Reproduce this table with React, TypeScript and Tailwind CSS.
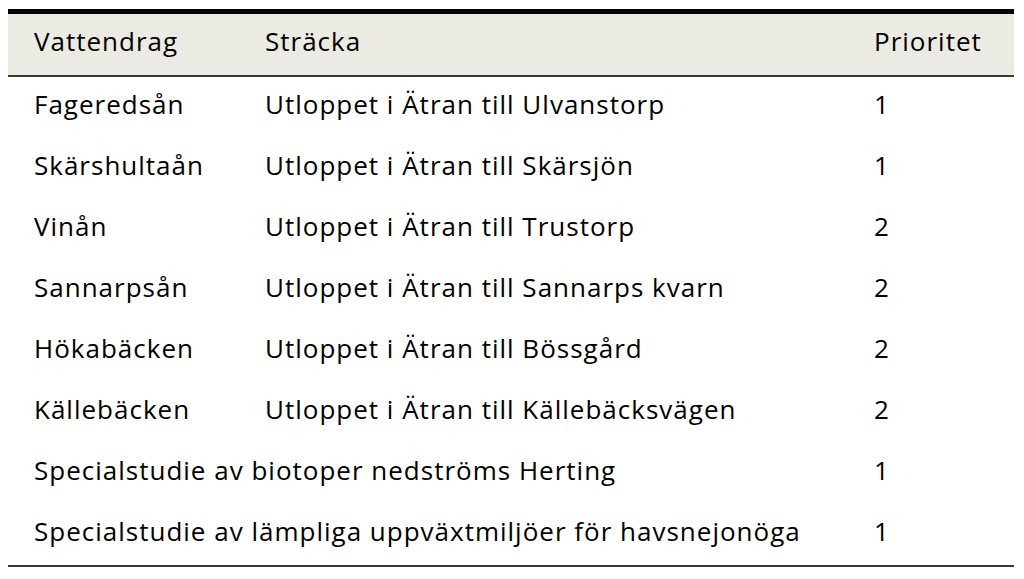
import React from "react";

const rows: [string, string | null, string][] = [
  ["Fageredsån", "Utloppet i Ätran till Ulvanstorp", "1"],
  ["Skärshultaån", "Utloppet i Ätran till Skärsjön", "1"],
  ["Vinån", "Utloppet i Ätran till Trustorp", "2"],
  ["Sannarpsån", "Utloppet i Ätran till Sannarps kvarn", "2"],
  ["Hökabäcken", "Utloppet i Ätran till Bössgård", "2"],
  ["Källebäcken", "Utloppet i Ätran till Källebäcksvägen", "2"],
  ["Specialstudie av biotoper nedströms Herting", null, "1"],
  ["Specialstudie av lämpliga uppväxtmiljöer för havsnejonöga", null, "1"],
];

export default function App() {
  return (
    <div className="w-[1024px] h-[579px] bg-white pt-[9px] text-black" style={{ fontFamily: "'Open Sans', sans-serif" }}>
      <div className="ml-[8px] w-[1006px] border-t-[5px] border-black border-b-2 border-b-[#3a3a3a]">
        <div className="grid grid-cols-[231px_609px_1fr] items-center h-[61px] pb-[6px] bg-[#ecebe3] px-[26px] text-[26px] tracking-[1px]">
          <div>Vattendrag</div>
          <div>Sträcka</div>
          <div>Prioritet</div>
        </div>
      </div>
      <div className="ml-[8px] w-[1006px] border-b-2 border-[#3a3a3a]">
        {rows.map(([a, b, c], i) => (
          <div key={i} className="grid grid-cols-[231px_609px_1fr] items-center h-[61px] pb-[6px] px-[26px] text-[26px] tracking-[1px]">
            {b === null ? (
              <div className="col-span-2 whitespace-nowrap">{a}</div>
            ) : (
              <>
                <div className="whitespace-nowrap">{a}</div>
                <div className="whitespace-nowrap">{b}</div>
              </>
            )}
            <div>{c}</div>
          </div>
        ))}
      </div>
    </div>
  );
}
